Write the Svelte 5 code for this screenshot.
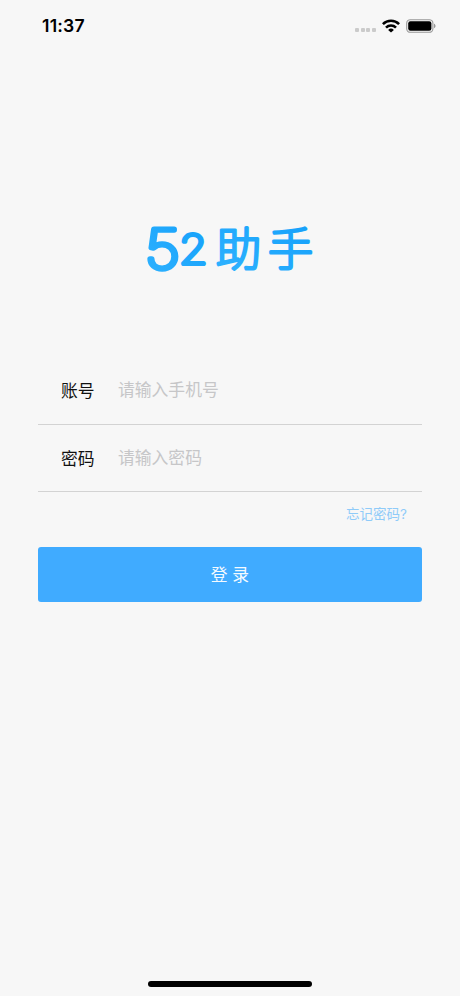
<script lang="ts">
	let account = $state('');
	let password = $state('');

	function handleSubmit(event: SubmitEvent) {
		event.preventDefault();
	}
</script>

<div class="screen">
	<header class="status-bar">
		<span class="time">11:37</span>
		<div class="indicators">
			<div class="signal">
				<span></span>
				<span></span>
				<span></span>
				<span></span>
			</div>
			<svg class="wifi" width="18" height="14" viewBox="0 0 18 14">
				<g fill="none" stroke="#000" stroke-width="2.6">
					<path d="M0.9 5.1a11.6 11.6 0 0 1 16.2 0" />
					<path d="M4 8.6a7.1 7.1 0 0 1 10 0" />
				</g>
				<path d="M9 13.6 6.1 10.9a4.1 4.1 0 0 1 5.8 0z" />
			</svg>
			<svg class="battery" width="30" height="14" viewBox="0 0 30 14">
				<rect x="0.7" y="0.7" width="26.2" height="12.6" rx="3.6" fill="none" stroke="#999" stroke-width="1.1" />
				<rect x="2.2" y="2.2" width="23.2" height="9.6" rx="2.2" />
				<path d="M28 4.8c2 .7 2 3.7 0 4.4z" fill="#999" />
			</svg>
		</div>
	</header>

	<main>
		<svg class="logo" width="172" height="52" viewBox="0 0 172 52" role="img" aria-label="52助手">
			<defs>
				<linearGradient id="logo-blue" x1="0" y1="1" x2="1" y2="0">
					<stop offset="0" stop-color="#30b3ff" />
					<stop offset="1" stop-color="#139ffa" />
				</linearGradient>
			</defs>
			<!-- thin weights with a thick round stroke give the soft stroke ends -->
			<text class="digits" x="0" y="44" transform="scale(1.15 1)">
				<tspan class="five" font-size="54">5</tspan><tspan class="two" dx="-0.8" dy="-5" font-size="40">2</tspan>
			</text>
			<text class="name" y="41" font-size="45">
				<tspan x="71">助</tspan><tspan x="123">手</tspan>
			</text>
		</svg>

		<form onsubmit={handleSubmit}>
			<label class="field">
				<span>账号</span>
				<input type="tel" placeholder="请输入手机号" bind:value={account} />
			</label>
			<label class="field">
				<span>密码</span>
				<input type="password" placeholder="请输入密码" bind:value={password} />
			</label>
			<button type="button" class="forgot">忘记密码?</button>
			<button type="submit" class="login">登 录</button>
		</form>
	</main>

	<div class="home-indicator"></div>
</div>

<style>
	:global(body) {
		margin: 0;
		background: #f7f7f7;
	}

	.screen {
		display: flex;
		flex-direction: column;
		height: 996px;
		box-sizing: border-box;
		padding-bottom: 9px;
		background: #f7f7f7;
		font-family: Inter, 'Noto Sans CJK SC', sans-serif;
		overflow: hidden;
	}

	.status-bar {
		display: flex;
		align-items: center;
		justify-content: space-between;
		height: 51px;
		padding: 0 24px 0 42px;
	}

	.time {
		font-size: 17.6px;
		font-weight: 600;
		letter-spacing: 0.2px;
	}

	.indicators {
		display: flex;
		align-items: center;
	}

	.signal {
		display: flex;
		gap: 1.6px;
		margin: 8px 6px 0 0;
	}

	.signal span {
		width: 4px;
		height: 4px;
		border-radius: 1px;
		background: #cbcbcb;
	}

	.wifi {
		margin-right: 6px;
	}

	main {
		flex: 1;
		padding: 0 38px;
	}

	.logo {
		display: block;
		margin: 174px 0 0 107px;
		overflow: visible;
	}

	.logo text {
		fill: url(#logo-blue);
		stroke: url(#logo-blue);
		stroke-linejoin: round;
	}

	.logo .digits {
		font-family: Inter, sans-serif;
		font-weight: 100;
	}

	.five {
		stroke-width: 5px;
	}

	.two {
		stroke-width: 4px;
	}

	.logo .name {
		font-family: 'Noto Sans CJK SC', sans-serif;
		font-weight: 100;
		stroke-width: 3.2px;
	}

	form {
		display: flex;
		flex-direction: column;
		margin-top: 80px;
	}

	.field {
		display: flex;
		align-items: center;
		height: 67.5px;
		box-sizing: border-box;
		padding-left: 23px;
		border-bottom: 1px solid #d3d3d3;
		font-size: 16.8px;
	}

	.field span {
		width: 57px;
		color: #111;
	}

	input {
		flex: 1;
		min-width: 0;
		padding: 0;
		border: none;
		outline: none;
		background: transparent;
		font: inherit;
	}

	input::placeholder {
		color: #c6c6c8;
		opacity: 1;
	}

	button {
		border: none;
		font-family: inherit;
		cursor: pointer;
	}

	.forgot {
		align-self: flex-end;
		height: 20px;
		margin: 12px 15px 0 0;
		padding: 0;
		background: none;
		color: #8fcbf9;
		font-size: 13.5px;
		line-height: 20px;
	}

	.login {
		height: 55px;
		margin-top: 23px;
		padding-bottom: 3px;
		border-radius: 3px;
		background: #40abff;
		color: #f4faff;
		font-size: 16.8px;
	}

	.home-indicator {
		align-self: center;
		width: 164px;
		height: 6px;
		border-radius: 3px;
		background: #000;
	}
</style>
